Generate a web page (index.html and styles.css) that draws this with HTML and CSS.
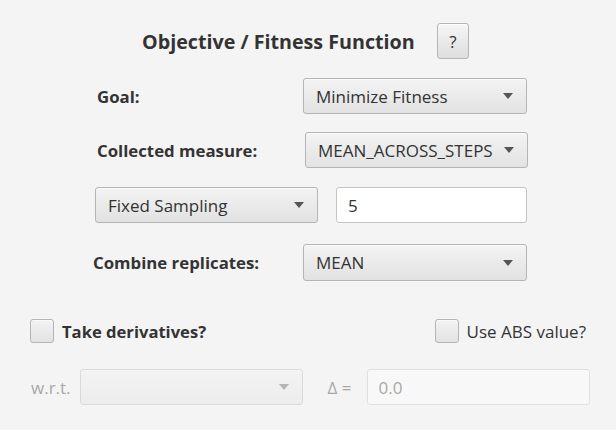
FILE: index.html
```html
<!DOCTYPE html>
<html>
<head>
<meta charset="utf-8">
<link rel="stylesheet" href="styles.css">
</head>
<body>
<div class="panel">
  <div class="title-row">
    <h1 class="title">Objective / Fitness Function</h1>
    <button class="btn help">?</button>
  </div>

  <div class="row row-goal">
    <span class="label label-goal">Goal:</span>
    <div class="combo"><span class="combo-text">Minimize Fitness</span><span class="arrow"></span></div>
  </div>

  <div class="row row-measure">
    <span class="label label-measure">Collected measure:</span>
    <div class="combo combo-measure"><span class="combo-text">MEAN_ACROSS_STEPS</span><span class="arrow"></span></div>
  </div>

  <div class="row row-sampling">
    <div class="combo combo-sampling"><span class="combo-text">Fixed Sampling</span><span class="arrow"></span></div>
    <div class="field field-samples">5</div>
  </div>

  <div class="row row-combine">
    <span class="label label-combine">Combine replicates:</span>
    <div class="combo"><span class="combo-text">MEAN</span><span class="arrow"></span></div>
  </div>

  <div class="row row-checks">
    <label class="check check-deriv"><span class="box"></span><span class="check-text bold">Take derivatives?</span></label>
    <label class="check check-abs"><span class="box"></span><span class="check-text">Use ABS value?</span></label>
  </div>

  <div class="row row-deriv disabled">
    <span class="small-label">w.r.t.</span>
    <div class="combo combo-wrt"><span class="combo-text"></span><span class="arrow"></span></div>
    <span class="small-label delta">Δ =</span>
    <div class="field field-delta">0.0</div>
  </div>
</div>
</body>
</html>
```

FILE: styles.css
```css
html, body {
  margin: 0;
  padding: 0;
  background: #f4f4f4;
}
body {
  width: 616px;
  height: 430px;
  overflow: hidden;
  font-family: "Open Sans", "Noto Sans", sans-serif;
  color: #333;
}
.panel {
  display: flex;
  flex-direction: column;
  padding-top: 23px;
}
.title-row {
  display: flex;
  align-items: center;
  height: 36px;
  padding-left: 142px;
}
.title {
  margin: 0;
  font-size: 19.7px;
  font-weight: 700;
  color: #333;
  width: 272px;
  white-space: nowrap;
}
.btn {
  font-family: inherit;
  box-sizing: border-box;
  border: 1px solid #b5b5b5;
  border-radius: 3px;
  background: linear-gradient(#f6f6f6, #dedede);
  box-shadow: inset 0 1px 0 #fff;
  color: #333;
}
.help {
  margin-left: 23px;
  width: 32px;
  height: 36px;
  font-size: 17px;
  padding: 0;
}
.row {
  display: flex;
  align-items: center;
  height: 36px;
}
.row-goal { margin-top: 19px; padding-left: 97px; }
.row-measure { margin-top: 18px; padding-left: 97px; }
.row-sampling { margin-top: 19px; padding-left: 95px; }
.row-combine { margin-top: 21px; padding-left: 93px; height: 37px; }
.row-checks {
  margin-top: 38px;
  padding: 0 30px;
  height: 24px;
  justify-content: space-between;
}
.row-deriv { margin-top: 26px; padding-left: 31px; }

.label {
  font-weight: 700;
  font-size: 16.8px;
  color: #333;
  white-space: nowrap;
}
.label-goal { width: 206px; }
.label-measure { width: 208px; }
.label-combine { width: 210px; }

.combo {
  box-sizing: border-box;
  display: flex;
  align-items: center;
  width: 224px;
  height: 100%;
  border: 1px solid #b5b5b5;
  border-radius: 3px;
  background: linear-gradient(#f3f3f3, #e2e2e2);
  box-shadow: inset 0 1px 0 #fbfbfb;
  padding-left: 12px;
  font-size: 17px;
  color: #333;
}
.combo-measure { width: 223px; }
.combo-sampling { width: 223px; }
.combo-text { flex: 1; white-space: nowrap; }
.arrow {
  width: 0;
  height: 0;
  border-left: 5px solid transparent;
  border-right: 5px solid transparent;
  border-top: 6px solid #555;
  margin-right: 13px;
  margin-left: 6px;
}
.field {
  box-sizing: border-box;
  height: 100%;
  display: flex;
  align-items: center;
  border: 1px solid #c4c4c4;
  border-radius: 3px;
  background: #fff;
  padding-left: 11px;
  font-size: 17px;
  color: #333;
}
.field-samples { width: 191px; margin-left: 18px; }

.check {
  display: flex;
  align-items: center;
}
.box {
  box-sizing: border-box;
  width: 24px;
  height: 24px;
  border: 1px solid #b5b5b5;
  border-radius: 3px;
  background: linear-gradient(#f3f3f3, #e2e2e2);
  box-shadow: inset 0 1px 0 #fbfbfb;
}
.check-text {
  margin-left: 8px;
  font-size: 17px;
  color: #333;
  white-space: nowrap;
}
.bold { font-weight: 700; font-size: 16.6px; }

.small-label {
  font-size: 17px;
  color: #333;
  white-space: nowrap;
}
.disabled .small-label,
.disabled .combo,
.disabled .field { opacity: 0.4; }
.combo-wrt { width: 223px; margin-left: 9px; }
.delta { margin-left: 25px; }
.field-delta { width: 223px; margin-left: 15px; }
```
